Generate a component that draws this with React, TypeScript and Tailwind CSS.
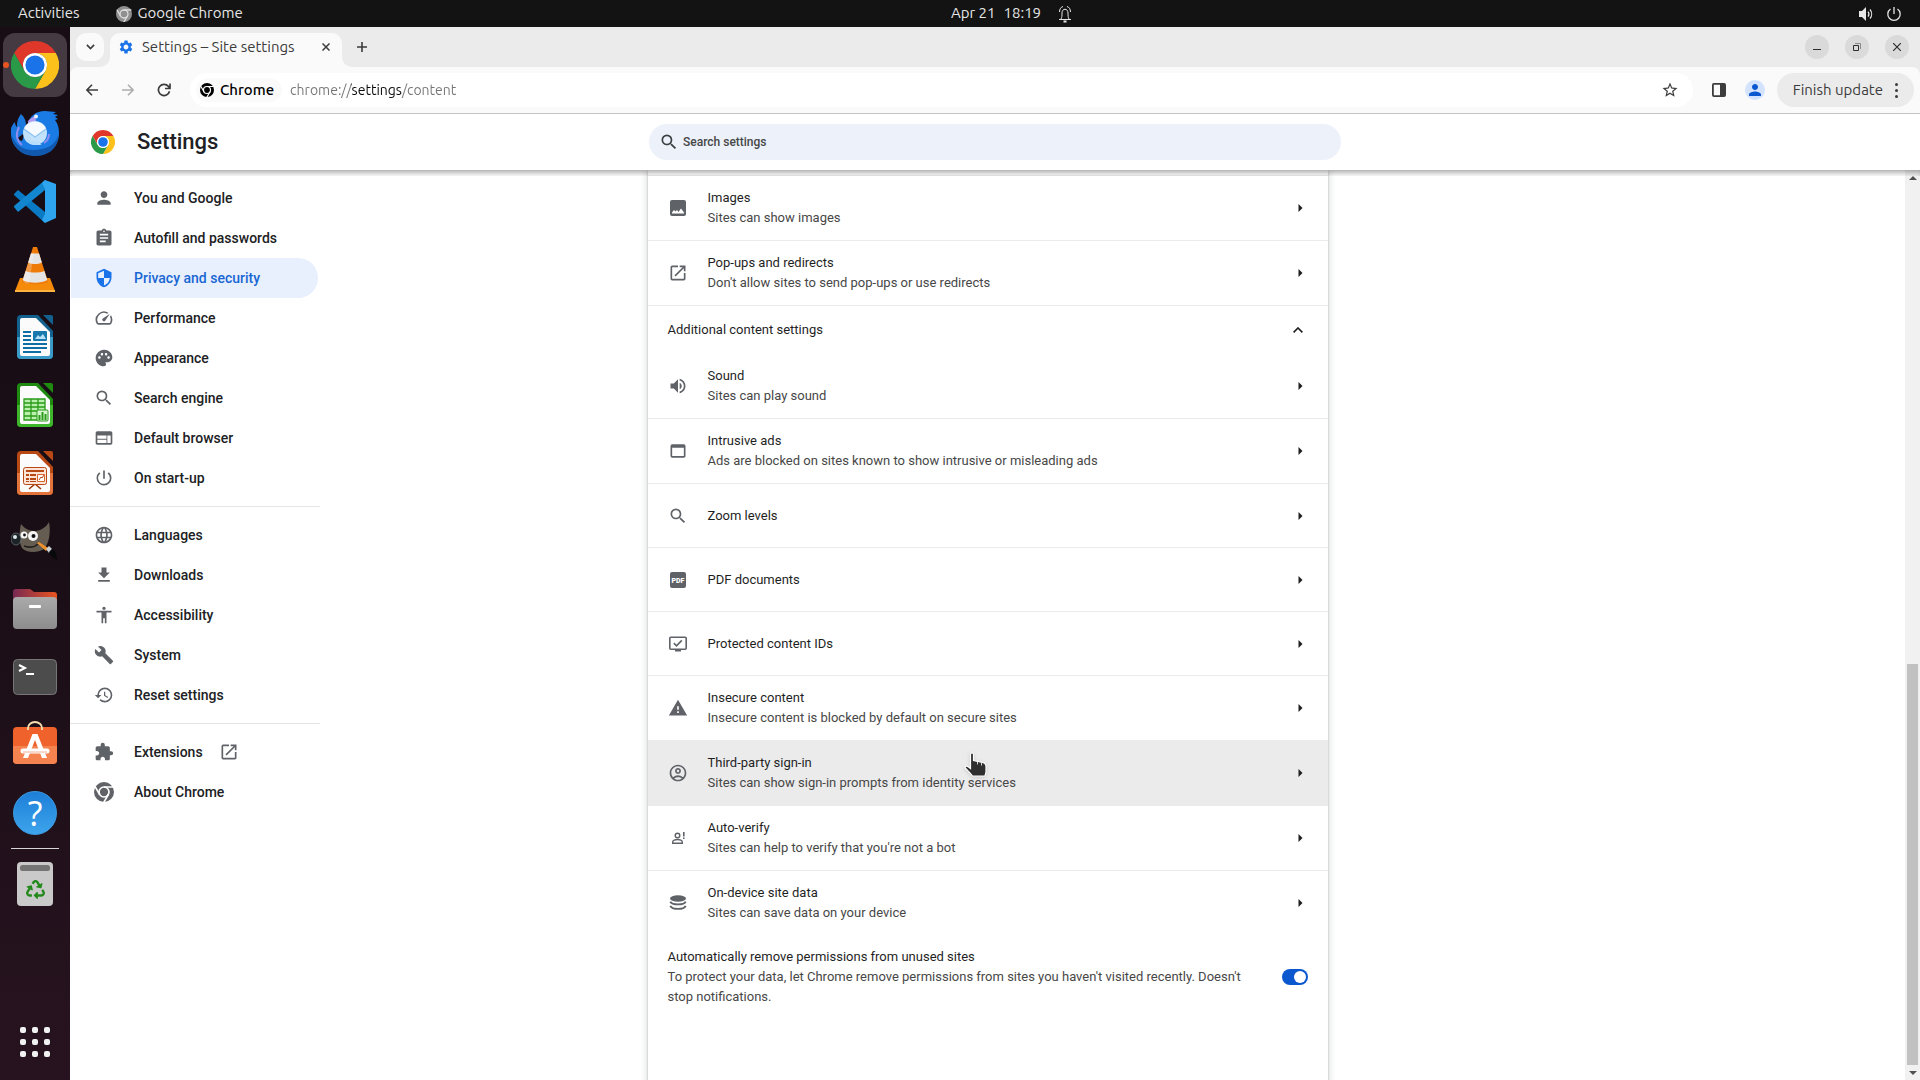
import React from 'react';
import { FaRecycle } from 'react-icons/fa';
import {
  MdAccessibility,
  MdAssignment,
  MdBuild,
  MdExtension,
  MdFileDownload,
  MdHistory,
  MdLanguage,
  MdLaunch,
  MdOutlineAccountCircle,
  MdPalette,
  MdPerson,
  MdPowerSettingsNew,
  MdSearch,
  MdSecurity,
  MdSettings,
  MdSpeed,
  MdStarOutline,
  MdVolumeUp,
  MdWarning,
  MdWeb,
  MdWebAsset,
} from 'react-icons/md';

type IconType = React.ComponentType<{ className?: string }>;

const ChromeLogo: IconType = ({ className }) => (
  <svg viewBox="0 0 48 48" className={className} aria-hidden="true">
    <path d="M24 12H44.785A24 24 0 0 0 3.215 12L13.608 30A12 12 0 0 1 24 12Z" fill="#e0372b" />
    <path d="M24 12H44.785A24 24 0 0 1 24 48L34.392 30A12 12 0 0 0 24 12Z" fill="#fcc21b" />
    <path d="M13.608 30L3.215 12A24 24 0 0 0 24 48L34.392 30A12 12 0 0 1 13.608 30Z" fill="#2a9a48" />
    <circle cx="24" cy="24" r="12" fill="#fff" />
    <circle cx="24" cy="24" r="9.6" fill="#1a73e8" />
  </svg>
);

const ChromeMono = ({ className, gap = '#fff' }: { className?: string; gap?: string }) => (
  <svg viewBox="0 0 48 48" className={className} aria-hidden="true">
    <circle cx="24" cy="24" r="24" fill="currentColor" />
    <g fill="none" stroke={gap} strokeWidth="4">
      <circle cx="24" cy="24" r="12" />
      <path d="M24 12H46M13.6 30L2.6 11M34.4 30L23.4 49" />
    </g>
  </svg>
);

// Row icons that the icon set has no match for
const ImageIcon: IconType = ({ className }) => (
  <svg viewBox="0 0 20 20" className={className} fill="currentColor" aria-hidden="true">
    <path
      fillRule="evenodd"
      d="M4 2h12a2 2 0 0 1 2 2v12a2 2 0 0 1-2 2H4a2 2 0 0 1-2-2V4a2 2 0 0 1 2-2Zm0 13.500h12v-1l-3-4-2.500 3.500-1.500-2-1.500 1.500-1.500-1.500L4 14.500Z"
    />
  </svg>
);

const PdfIcon: IconType = ({ className }) => (
  <svg viewBox="0 0 20 20" className={className} aria-hidden="true">
    <rect x="2" y="2" width="16" height="16" rx="2" fill="currentColor" />
    <text x="10" y="12.500" textAnchor="middle" fontFamily="Roboto, sans-serif" fontWeight="900" fontSize="7" fill="#fff">
      PDF
    </text>
  </svg>
);

const ProtectedIcon: IconType = ({ className }) => (
  <svg viewBox="0 0 20 20" className={className} aria-hidden="true">
    <rect x="1.800" y="3.300" width="16.400" height="12" rx="1" fill="none" stroke="currentColor" strokeWidth="1.600" />
    <path d="M7 15.500h6v2H7z" fill="currentColor" />
    <path d="M5.800 9.200l2.700 2.600 5.300-5.400" fill="none" stroke="currentColor" strokeWidth="1.600" />
  </svg>
);

const AutoVerifyIcon: IconType = ({ className }) => (
  <svg viewBox="0 0 20 20" className={className} fill="none" stroke="currentColor" strokeWidth="1.400" aria-hidden="true">
    <circle cx="9.500" cy="7.500" r="2.300" />
    <path d="M4.700 15.300v-1.300c0-1.500 2.600-2.500 4.800-2.500s4.800 1 4.800 2.500v1.300Z" />
    <path d="M15.800 4v4.500M15.800 9.500v1.500" strokeWidth="1.600" />
  </svg>
);

const DatabaseIcon: IconType = ({ className }) => (
  <svg viewBox="0 0 20 20" className={className} aria-hidden="true">
    <ellipse cx="10" cy="5.500" rx="8" ry="3.300" fill="currentColor" />
    <path
      d="M2.300 8.600c.8 1.700 3.900 2.800 7.700 2.800s6.900-1.100 7.700-2.800M2.300 12.800c.8 1.900 3.900 3.100 7.700 3.100s6.900-1.200 7.700-3.100"
      fill="none"
      stroke="currentColor"
      strokeWidth="1.900"
    />
  </svg>
);

const ThunderbirdIcon = () => (
  <svg viewBox="0 0 48 48" className="size-12" aria-hidden="true">
    <path d="M10 5c4 4 5 7 5 11l-3 9-8 6C-1 20 0 17 4 13c0 3 1 4 2 5 0-6 1-9 4-13Z" fill="#1b78dc" />
    <path d="M17 16c1-9 8-14 17-14l11 1-3 2 5 1-3 2 3 2-3 1c3 4 4 8 4 13 0 14-10 22-24 22S1 38 0 26c-.500-4 0-7 1-9 1 9 4 13 10 15Z" fill="#1a7be4" />
    <path d="M0 24c3 11 11 17 22 17 13 0 22-5 25-14 0 12-9 20-23 20S1 38 0 24Z" fill="#1059ae" />
    <path d="M17 13c-1-1 3-4 7-6l1 5c-3 1-6 3-8 5Z" fill="#b59af0" />
    <circle cx="25" cy="7.500" r="2" fill="#e9f4ff" />
    <path d="M8 18c-3 6-3 13 3 18M33 34c3-2 5-6 5-9" fill="none" stroke="#8e8df0" strokeWidth="2" />
    <circle cx="24" cy="24" r="12" fill="#c2e2fb" />
    <path d="M13 20a12 12 0 0 1 22 0L24 28Z" fill="#f4faff" />
    <path d="M13 20l11 8 11-8" fill="none" stroke="#8cc3ee" strokeWidth="1.200" />
    <path d="M14 31c5 5 9 5 17 5l-4-2 4-1Z" fill="#b6ddfb" />
  </svg>
);

const CodeIcon = () => (
  <svg viewBox="0 0 48 48" className="size-12" aria-hidden="true">
    <path d="M3 17l4-4 27 22v11L3 18Z" fill="#0a7ac4" />
    <path d="M3 30l4 5 27-22V3L3 29Z" fill="#1286cf" />
    <path d="M34 3l11 4v34l-11 5-3-3 3-6V12l-3-6Z" fill="#2fa4ee" />
  </svg>
);

const VlcIcon = () => (
  <svg viewBox="0 0 48 48" className="size-12" aria-hidden="true">
    <path d="M9 33h30l5 13H4Z" fill="#f58a0b" />
    <path d="M4 45h40v2H4z" fill="#ffb340" />
    <path d="M22 2h4l11 35c-5 3-21 3-26 0Z" fill="#ee7a08" />
    <path d="M19.900 8.500h8.200l2.800 9c-4 2-9.800 2-13.800 0ZM14.600 26c5 2 13.800 2 18.800 0l2.900 9c-6 3.500-18.600 3.500-24.600 0Z" fill="#e4e4e4" />
    <path d="M20 8l-8 28c2 3 4 2 6 3l5-31Z" fill="#fff" opacity=".25" />
  </svg>
);

const OfficeIcon = ({ color, light, children }: { color: string; light: string; children: React.ReactNode }) => (
  <svg viewBox="0 0 48 48" className="size-12" aria-hidden="true">
    <path d="M10 2h17l15 16v24a4 4 0 0 1-4 4H10a4 4 0 0 1-4-4V6a4 4 0 0 1 4-4Z" fill={color} />
    <path d="M6 24h36v18a4 4 0 0 1-4 4H10a4 4 0 0 1-4-4Z" fill={light} />
    <path d="M11 5h14l14 14v22a2 2 0 0 1-2 2H11a2 2 0 0 1-2-2V7a2 2 0 0 1 2-2Z" fill="#fbfbfb" />
    <path d="M32 2h8a2 2 0 0 1 2 2v8Z" fill={color} />
    {children}
  </svg>
);

const GimpIcon = () => (
  <svg viewBox="0 0 48 48" className="size-12" aria-hidden="true">
    <path d="M10 7c5 6 9 7 15 7 6-1 10-4 13-9 2 10 0 22-5 27-6 4-18 4-22-1-3-5-3-16-1-24Z" fill="#655d52" />
    <ellipse cx="5" cy="22" rx="5" ry="6" fill="#1d2428" stroke="#7b8a90" strokeWidth=".600" />
    <ellipse cx="4" cy="20" rx="2" ry="2" fill="#dfe8ec" />
    <circle cx="13" cy="18" r="3.500" fill="#f5f5f5" />
    <circle cx="22" cy="19" r="5" fill="#f5f5f5" />
    <circle cx="13.500" cy="18" r="1.400" fill="#111" />
    <circle cx="22.500" cy="19" r="2" fill="#111" />
    <path d="M13 29c6 2 11 1 14-2" stroke="#26221d" strokeWidth="1.500" fill="none" />
    <path d="M26 26l2-1 9 6-2 3Z" fill="#f0932b" />
    <path d="M35 32l3-3 3 3-3 4Z" fill="#c9ced2" />
    <path d="M38 35l3-3c3 1 5 5 5 11-4-2-7-4-8-8Z" fill="#08090a" />
  </svg>
);

const FilesIcon = () => (
  <svg viewBox="0 0 48 48" className="size-12" aria-hidden="true">
    <defs>
      <linearGradient id="files-back" x1="0" x2="1">
        <stop offset="0" stopColor="#772953" />
        <stop offset="1" stopColor="#e95420" />
      </linearGradient>
      <linearGradient id="files-front" x1="0" x2="0" y1="0" y2="1">
        <stop offset="0" stopColor="#aaa" />
        <stop offset="1" stopColor="#8d8d8d" />
      </linearGradient>
    </defs>
    <path d="M5 4h14l4 3h20a3 3 0 0 1 3 3v10H2V7a3 3 0 0 1 3-3Z" fill="url(#files-back)" />
    <rect x="2" y="12" width="44" height="32" rx="4" fill="url(#files-front)" />
    <rect x="18" y="20" width="12" height="3" rx="1" fill="#fff" />
  </svg>
);

const TerminalIcon = () => (
  <svg viewBox="0 0 48 48" className="size-12" aria-hidden="true">
    <rect x="2.500" y="6.500" width="43" height="35" rx="4" fill="#4c4c4c" stroke="#767676" />
    <path d="M8 12l6 3-6 3" fill="none" stroke="#fff" strokeWidth="2" />
    <path d="M15 20h8v2h-8z" fill="#fff" />
  </svg>
);

const SoftwareIcon = () => (
  <svg viewBox="0 0 48 48" className="size-12" aria-hidden="true">
    <rect x="2" y="6" width="44" height="37" rx="4" fill="#f0622b" />
    <path d="M2 25h44v14a4 4 0 0 1-4 4H6a4 4 0 0 1-4-4Z" fill="#f5834f" />
    <path d="M17 9V7a7 6 0 0 1 14 0v2" fill="none" stroke="#f6dfae" strokeWidth="1.800" />
    <path d="M21.500 13h5L36 37h-5l-7-18-7 18h-5Z" fill="#fff" />
    <path d="M12 30h24" stroke="#fff" strokeWidth="5" strokeLinecap="round" />
    <path d="M12 31h24" stroke="#f0b297" strokeWidth="1" />
  </svg>
);

const HelpIcon = () => (
  <span className="flex size-11 items-center justify-center rounded-full border border-[#3d9be4] bg-gradient-to-b from-[#1d7fd8] to-[#3da4ec] font-['Open_Sans',sans-serif] text-[34px] leading-none text-white">
    ?
  </span>
);

const TrashIcon = () => (
  <svg viewBox="0 0 48 48" className="size-12" aria-hidden="true">
    <rect x="6" y="2" width="36" height="44" rx="4" fill="#c9c9c9" />
    <rect x="9" y="5" width="30" height="6" rx="2.500" fill="#747474" />
    <FaRecycle x="15" y="20" size="19" color="#23891b" />
  </svg>
);

const dockApps: { name: string; icon: React.ReactNode; active?: boolean }[] = [
  { name: 'Google Chrome', icon: <ChromeLogo className="size-12" />, active: true },
  { name: 'Thunderbird', icon: <ThunderbirdIcon /> },
  { name: 'Visual Studio Code', icon: <CodeIcon /> },
  { name: 'VLC', icon: <VlcIcon /> },
  {
    name: 'Writer',
    icon: (
      <OfficeIcon color="#12618f" light="#3a9bc9">
        <path d="M12 18h8v2h-8zm0 4h8v2h-8zm0 4h8v2h-8zm0 4h24v2H12zm0 4h24v2H12zm0 4h18v2H12z" fill="#0f6fa5" />
        <rect x="22" y="18" width="14" height="10" rx="1" fill="#1778ad" />
        <path d="M24 26l3-4 2 2 3-3 3 5Z" fill="#b5e0f5" />
      </OfficeIcon>
    ),
  },
  {
    name: 'Calc',
    icon: (
      <OfficeIcon color="#1f8a10" light="#3fb52c">
        <path d="M13 18h21v21H13z" fill="#b9f0ab" />
        <path d="M13 18h21v21H13zM13 22h21M13 26h21M13 30h21M13 35h21M20 18v21M27 18v21" fill="none" stroke="#2a9a1a" strokeWidth="1.300" />
        <rect x="26" y="29" width="11" height="11" rx="1" fill="#d6f7cd" stroke="#2a9a1a" />
        <path d="M28.500 39v-5M31.500 39v-8M34.500 39v-6" stroke="#2a9a1a" strokeWidth="2" />
      </OfficeIcon>
    ),
  },
  {
    name: 'Impress',
    icon: (
      <OfficeIcon color="#b84814" light="#e2733a">
        <path d="M18 40l6-5 6 5" fill="none" stroke="#9c3a0c" strokeWidth="1.600" />
        <rect x="12.500" y="18.500" width="23" height="17" rx="2" fill="#fce4d6" stroke="#b84814" />
        <path d="M15 21h18v2H15zm0 4h3v2h-3zm0 4h3v2h-3zm0 3h3v1h-3zm4-7h6v2h-6zm0 4h6v2h-6zm0 3h6v1h-6z" fill="#b84814" />
        <path d="M26.500 25.500h7v7h-7z" fill="#fff" stroke="#d9662c" />
        <path d="M28 31l2-3 1 1 2-3" fill="none" stroke="#b84814" />
      </OfficeIcon>
    ),
  },
  { name: 'GIMP', icon: <GimpIcon /> },
  { name: 'Files', icon: <FilesIcon /> },
  { name: 'Terminal', icon: <TerminalIcon /> },
  { name: 'Ubuntu Software', icon: <SoftwareIcon /> },
  { name: 'Help', icon: <HelpIcon /> },
];

const navGroups: { label: string; icon: IconType; selected?: boolean; external?: boolean }[][] = [
  [
    { label: 'You and Google', icon: MdPerson },
    { label: 'Autofill and passwords', icon: MdAssignment },
    { label: 'Privacy and security', icon: MdSecurity, selected: true },
    { label: 'Performance', icon: MdSpeed },
    { label: 'Appearance', icon: MdPalette },
    { label: 'Search engine', icon: MdSearch },
    { label: 'Default browser', icon: MdWeb },
    { label: 'On start-up', icon: MdPowerSettingsNew },
  ],
  [
    { label: 'Languages', icon: MdLanguage },
    { label: 'Downloads', icon: MdFileDownload },
    { label: 'Accessibility', icon: MdAccessibility },
    { label: 'System', icon: MdBuild },
    { label: 'Reset settings', icon: MdHistory },
  ],
  [
    { label: 'Extensions', icon: MdExtension, external: true },
    { label: 'About Chrome', icon: ChromeMono },
  ],
];

type Row = { title: string; sub?: string; icon: IconType; hovered?: boolean };

const contentRows: Row[] = [
  { title: 'Images', sub: 'Sites can show images', icon: ImageIcon },
  { title: 'Pop-ups and redirects', sub: "Don't allow sites to send pop-ups or use redirects", icon: MdLaunch },
];

const additionalRows: Row[] = [
  { title: 'Sound', sub: 'Sites can play sound', icon: MdVolumeUp },
  { title: 'Intrusive ads', sub: 'Ads are blocked on sites known to show intrusive or misleading ads', icon: MdWebAsset },
  { title: 'Zoom levels', icon: MdSearch },
  { title: 'PDF documents', icon: PdfIcon },
  { title: 'Protected content IDs', icon: ProtectedIcon },
  { title: 'Insecure content', sub: 'Insecure content is blocked by default on secure sites', icon: MdWarning },
  { title: 'Third-party sign-in', sub: 'Sites can show sign-in prompts from identity services', icon: MdOutlineAccountCircle, hovered: true },
  { title: 'Auto-verify', sub: "Sites can help to verify that you're not a bot", icon: AutoVerifyIcon },
  { title: 'On-device site data', sub: 'Sites can save data on your device', icon: DatabaseIcon },
];

const TopBar = () => (
  <header className="grid h-[27px] shrink-0 grid-cols-[1fr_auto_1fr] items-center bg-[#131313] px-[18px] text-[15px] text-[#e6e6e6]">
    <div className="flex items-center">
      <button type="button">Activities</button>
      <button type="button" className="ml-9 flex items-center gap-[6px]">
        <ChromeMono className="size-4 text-[#8f8f8f]" gap="#dcdcdc" />
        Google Chrome
      </button>
    </div>
    <button type="button" className="flex items-center gap-2 pl-26">
      <span>Apr 21</span>
      <span>18:19</span>
      <svg viewBox="0 0 16 18" className="ml-2 h-[18px] w-4" fill="none" stroke="currentColor" aria-hidden="true">
        <path d="M2 14.500h12M4 14c1-2 1-3 1-6 0-5 6-5 6 0 0 3 0 4 1 6M2.500 7C2.500 4 4 2 6 1.500M13.500 7c0-3-1.500-5-3.500-5.500" />
        <path d="M6.500 16.500h3" strokeWidth="2" />
      </svg>
    </button>
    <div className="flex items-center justify-end gap-3">
      <svg viewBox="0 0 16 16" className="size-4" fill="none" stroke="currentColor" aria-hidden="true">
        <path d="M1 5h3l4-4v14l-4-4H1Z" fill="currentColor" stroke="none" />
        <path d="M10 5.500a4 4 0 0 1 0 5M12 3.500a7 7 0 0 1 0 9" strokeWidth="1.200" />
      </svg>
      <svg viewBox="0 0 16 16" className="size-4" fill="none" stroke="currentColor" strokeWidth="1.300" aria-hidden="true">
        <path d="M8 1v7M4.500 3a6.200 6.200 0 1 0 7 0" />
      </svg>
    </div>
  </header>
);

const Dock = () => (
  <nav aria-label="Dock" className="flex w-[70px] shrink-0 flex-col items-center bg-gradient-to-b from-[#180d14] via-[#1a0e16] to-[#27131f] py-[6px]">
    <ul className="flex flex-col gap-1">
      {dockApps.map((app) => (
        <li key={app.name} className="relative">
          <button
            type="button"
            aria-label={app.name}
            className={`flex size-16 items-center justify-center rounded-xl ${app.active ? 'bg-[#453a42]' : ''}`}
          >
            {app.icon}
          </button>
          {app.active && <span className="absolute top-[29px] left-0 size-[6px] rounded-full bg-[#e95420]" />}
        </li>
      ))}
    </ul>
    <div className="my-[3px] h-px w-12 bg-[#d9d6d8]" />
    <button type="button" aria-label="Trash" className="flex size-16 items-center justify-center">
      <TrashIcon />
    </button>
    <button type="button" aria-label="Show applications" className="mt-auto flex size-16 items-center justify-center">
      <span className="grid grid-cols-3 gap-[6px]">
        {Array.from({ length: 9 }, (_, i) => (
          <span key={i} className="size-[6px] rounded-[2px] bg-[#f2f2f2]" />
        ))}
      </span>
    </button>
  </nav>
);

const TabStrip = () => (
  <div className="flex h-10 shrink-0 items-center bg-[#ebebeb] pr-[11px] pl-[6px] text-[#3c3c3c]">
    <button type="button" aria-label="Search tabs" className="flex size-7 items-center justify-center rounded-[10px] bg-[#fafafa]">
      <svg viewBox="0 0 10 6" className="w-[9px]" fill="none" stroke="currentColor" strokeWidth="1.800" aria-hidden="true">
        <path d="M1 1l4 4 4-4" />
      </svg>
    </button>
    <div className="relative ml-[6px] flex h-[34px] w-[232px] items-center self-end rounded-t-[10px] bg-[#fafafa] pb-[6px] pl-2">
      <svg viewBox="0 0 10 10" className="absolute bottom-0 left-[-10px] size-[10px]" aria-hidden="true">
        <path d="M10 0v10H0A10 10 0 0 0 10 0Z" fill="#fafafa" />
      </svg>
      <svg viewBox="0 0 10 10" className="absolute right-[-10px] bottom-0 size-[10px]" aria-hidden="true">
        <path d="M0 0v10h10A10 10 0 0 1 0 0Z" fill="#fafafa" />
      </svg>
      <MdSettings className="size-4 text-[#1a73e8]" />
      <span className="ml-2 grow text-[15px] whitespace-nowrap">Settings – Site settings</span>
      <button type="button" aria-label="Close tab" className="mr-2 flex size-4 items-center justify-center">
        <svg viewBox="0 0 8 8" className="size-2" stroke="currentColor" strokeWidth="1.500" aria-hidden="true">
          <path d="M.500.500l7 7M7.500.500l-7 7" />
        </svg>
      </button>
    </div>
    <button type="button" aria-label="New tab" className="ml-[6px] flex size-7 items-center justify-center">
      <svg viewBox="0 0 10 10" className="size-[10px]" stroke="currentColor" strokeWidth="1.600" aria-hidden="true">
        <path d="M5 0v10M0 5h10" />
      </svg>
    </button>
    <div className="ml-auto flex gap-4">
      <button type="button" aria-label="Minimise" className="flex size-6 items-center justify-center rounded-full bg-[#dadada]">
        <span className="mt-[5px] h-px w-2 bg-[#2e2e2e]" />
      </button>
      <button type="button" aria-label="Restore" className="flex size-6 items-center justify-center rounded-full bg-[#dadada]">
        <svg viewBox="0 0 8 8" className="size-2" fill="none" aria-hidden="true">
          <path d="M.500 2.500h5v5h-5z" stroke="#2e2e2e" />
          <path d="M2 .500h5.500V6" stroke="#8a8a8a" />
        </svg>
      </button>
      <button type="button" aria-label="Close" className="flex size-6 items-center justify-center rounded-full bg-[#dadada]">
        <svg viewBox="0 0 8 8" className="size-2" stroke="#2e2e2e" strokeWidth="1.200" aria-hidden="true">
          <path d="M0 0l8 8M8 0L0 8" />
        </svg>
      </button>
    </div>
  </div>
);

const Toolbar = () => (
  <div className="shrink-0 bg-[#ebebeb]">
    <div className="flex h-[47px] items-center rounded-t-lg border-b border-[#c4c4c4] bg-[#fafafa] pr-[6px] pl-2 text-[#3c3c3c]">
      <button type="button" aria-label="Back" className="flex size-7 items-center justify-center">
        <svg viewBox="0 0 12 12" className="size-3" fill="none" stroke="currentColor" strokeWidth="1.600" aria-hidden="true">
          <path d="M12 6H1M6 .700L.900 6 6 11.300" />
        </svg>
      </button>
      <button type="button" aria-label="Forward" className="ml-2 flex size-7 items-center justify-center text-[#adadad]">
        <svg viewBox="0 0 12 12" className="size-3" fill="none" stroke="currentColor" strokeWidth="1.600" aria-hidden="true">
          <path d="M0 6h11M6 .700L11.100 6 6 11.300" />
        </svg>
      </button>
      <button type="button" aria-label="Reload" className="ml-2 flex size-7 items-center justify-center">
        <svg viewBox="0 0 14 14" className="size-[14px]" fill="none" stroke="currentColor" strokeWidth="1.700" aria-hidden="true">
          <path d="M12.500 8.200A5.600 5.600 0 1 1 11.400 3.400L13 5.200M13 .500v5H8" />
        </svg>
      </button>
      <div className="ml-3 flex h-[34px] grow items-center rounded-full bg-white pr-[14px] pl-[6px]">
        <button type="button" className="flex h-6 items-center gap-[6px] rounded-full bg-[#fafafa] pr-2 pl-1 text-[15px] font-medium text-black">
          <ChromeMono className="size-[14px]" />
          Chrome
        </button>
        <input
          type="text"
          aria-label="Address"
          defaultValue="chrome://settings/content"
          className="ml-2 grow bg-[linear-gradient(to_right,#757575_61px,#0a0a0a_61px,#0a0a0a_112px,#757575_112px)] bg-clip-text text-sm text-transparent outline-none"
        />
        <button type="button" aria-label="Bookmark this tab">
          <MdStarOutline className="size-[18px]" />
        </button>
      </div>
      <button type="button" aria-label="Side panel" className="ml-[18px] flex size-4 items-center justify-center">
        <svg viewBox="0 0 16 16" className="size-4" fill="none" aria-hidden="true">
          <rect x="1.900" y="1.900" width="12.200" height="12.200" rx="1" stroke="currentColor" strokeWidth="1.800" />
          <path d="M9 2h5v12H9z" fill="currentColor" />
        </svg>
      </button>
      <button type="button" aria-label="Profile" className="ml-[18px] flex size-5 items-center justify-center rounded-full bg-[#d3e3fd]">
        <MdPerson className="size-[18px] text-[#0b57d0]" />
      </button>
      <button type="button" className="ml-3 flex h-[34px] items-center gap-3 rounded-full bg-[#ebebeb] px-4 text-[15px] whitespace-nowrap">
        Finish update
        <span className="flex flex-col gap-[3px]">
          <span className="size-[3px] rounded-full bg-[#3c3c3c]" />
          <span className="size-[3px] rounded-full bg-[#3c3c3c]" />
          <span className="size-[3px] rounded-full bg-[#3c3c3c]" />
        </span>
      </button>
    </div>
  </div>
);

const SettingsHeader = () => (
  <div className="relative z-10 grid h-14 shrink-0 grid-cols-[1fr_692px_1fr] items-center bg-white">
    <div className="flex items-center gap-[22px] pl-[21px]">
      <ChromeLogo className="size-6" />
      <h1 className="text-[22px] leading-8 font-medium text-[#202124]">Settings</h1>
    </div>
    <label className="flex h-9 items-center gap-1 rounded-full bg-[#ecf1fa] pl-[10px] text-[#3c4043]">
      <MdSearch className="size-5" />
      <input
        type="text"
        aria-label="Search settings"
        placeholder="Search settings"
        className="grow bg-transparent text-xs font-medium outline-none placeholder:text-[#474747]"
      />
    </label>
    <div className="absolute inset-x-0 top-full h-[6px] shadow-[inset_0_5px_6px_-3px_rgba(0,0,0,0.4)]" />
  </div>
);

const SideMenu = () => (
  <nav aria-label="Settings" className="pt-2 text-sm font-medium text-[#202124]">
    {navGroups.map((group, i) => (
      <ul key={i} className={`w-[250px] ${i > 0 ? 'mt-2 border-t border-[#e4e4e4] pt-2' : ''}`}>
        {group.map((item) => (
          <li key={item.label}>
            <a
              href="#"
              className={`mr-[2px] ml-px flex h-10 items-center gap-5 rounded-r-full pl-[23px] ${
                item.selected ? 'bg-[#e8f0fe] text-[#1967d2]' : ''
              }`}
            >
              <item.icon className={item.selected ? 'size-5 text-[#1a73e8]' : 'size-5 text-[#5f6368]'} />
              {item.label}
              {item.external && <MdLaunch className="-ml-1 size-5 text-[#5f6368]" />}
            </a>
          </li>
        ))}
      </ul>
    ))}
  </nav>
);

const LinkRow = ({ row, last }: { row: Row; last?: boolean }) => (
  <li className={last ? '' : 'border-b border-[#ebebeb]'}>
    <a
      href="#"
      className={`flex items-center gap-5 pr-[25px] pl-5 ${row.sub ? 'py-3' : 'h-[63px]'} ${row.hovered ? 'bg-[#ebebeb]' : ''}`}
    >
      <row.icon className="size-5 shrink-0 text-[#5f6368]" />
      <span className="grow">
        <span className="block text-[#1f1f1f]">{row.title}</span>
        {row.sub && <span className="block text-[#474747]">{row.sub}</span>}
      </span>
      <svg viewBox="0 0 5 8" className="h-2 w-[5px] shrink-0" aria-hidden="true">
        <path d="M.500 0l4 4-4 4Z" fill="#1f1f1f" />
      </svg>
    </a>
  </li>
);

const ContentSettings = () => (
  <main className="w-[680px] bg-white text-[13px] leading-5 text-[#1f1f1f] shadow-[0_1px_2px_0_rgba(60,64,67,0.3),0_2px_6px_2px_rgba(60,64,67,0.15)]">
    <div className="h-[6px] border-b border-[#ebebeb]" />
    <ul>
      {contentRows.map((row) => (
        <LinkRow key={row.title} row={row} />
      ))}
    </ul>
    <button type="button" aria-expanded="true" className="flex h-12 w-full items-center justify-between pr-[25px] pl-5 text-left">
      Additional content settings
      <svg viewBox="0 0 10 6" className="h-[6px] w-[10px]" fill="none" stroke="#1f1f1f" strokeWidth="1.600" aria-hidden="true">
        <path d="M.600 5.400L5 1l4.400 4.400" />
      </svg>
    </button>
    <ul>
      {additionalRows.map((row, i) => (
        <LinkRow key={row.title} row={row} last={i === additionalRows.length - 1} />
      ))}
    </ul>
    <label className="flex items-center px-5 py-3">
      <span className="grow pr-8">
        <span className="block">Automatically remove permissions from unused sites</span>
        <span className="block text-[#474747]">
          To protect your data, let Chrome remove permissions from sites you haven't visited recently. Doesn't stop notifications.
        </span>
      </span>
      <input type="checkbox" role="switch" defaultChecked className="peer sr-only" />
      <span className="flex h-4 w-[26px] shrink-0 items-center justify-end rounded-full bg-[#0b57d0] px-[2px]">
        <span className="size-3 rounded-full bg-white" />
      </span>
    </label>
  </main>
);

const Scrollbar = () => (
  <div className="flex w-[15px] shrink-0 flex-col items-center bg-[#f1f1f1] py-[5px]" aria-hidden="true">
    <svg viewBox="0 0 8 4" className="mt-px h-1 w-2">
      <path d="M0 4l4-4 4 4Z" fill="#505050" />
    </svg>
    <span className="grow-[485]" />
    <span className="w-[11px] grow-[401] bg-[#c1c1c1]" />
    <svg viewBox="0 0 8 4" className="mt-[6px] h-1 w-2">
      <path d="M0 0l4 4 4-4Z" fill="#505050" />
    </svg>
  </div>
);

const HandCursor = () => (
  <svg viewBox="0 0 24 28" className="pointer-events-none absolute top-[725px] left-[894px] h-7 w-6 drop-shadow" aria-hidden="true">
    <path
      d="M6.500 2.500c0-2 3-2 3 0v6l9 2c2.500.500 3.500 1.500 3.500 4v5c0 2-1 3-1 4.500H8.500C6.500 21 4 19 1.300 16 .500 14 2.500 13.500 4.500 15l2 1.500Z"
      fill="#2f2f2f"
      stroke="#fff"
      strokeWidth="1.200"
    />
    <path d="M13.500 9.500v3M17.500 10.500v3" stroke="#fff" strokeWidth=".800" />
  </svg>
);

export default function App() {
  return (
    <div className="flex h-screen flex-col overflow-hidden font-['Ubuntu','Noto_Sans',sans-serif]">
      <TopBar />
      <div className="flex min-h-0 grow">
        <Dock />
        <div className="relative flex min-w-0 grow flex-col bg-white">
          <TabStrip />
          <Toolbar />
          <div className="flex min-h-0 grow flex-col font-['Roboto',sans-serif]">
            <SettingsHeader />
            <div className="flex min-h-0 grow">
              <div className="grid grow grid-cols-[1fr_auto_1fr]">
                <SideMenu />
                <ContentSettings />
              </div>
              <Scrollbar />
            </div>
          </div>
          <HandCursor />
        </div>
      </div>
    </div>
  );
}
